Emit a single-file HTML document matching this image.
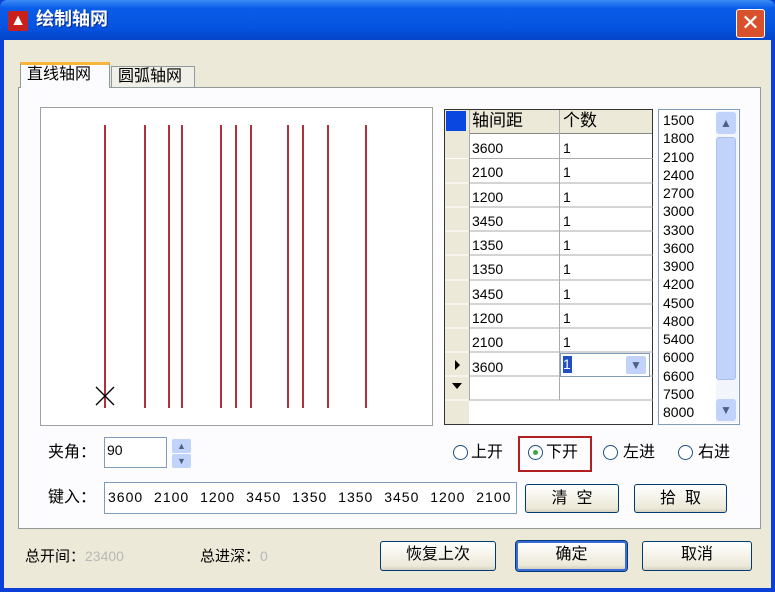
<html><head><style>
body{margin:0;width:775px;height:592px;overflow:hidden;font-family:"Liberation Sans","Noto Sans CJK SC",sans-serif;}
.win{position:absolute;left:0;top:0;width:775px;height:592px;background:#0a3fd8;}
.tb{position:absolute;left:0;top:0;width:775px;height:40px;background:linear-gradient(#3a8cf5,#0a5de8 20%,#0553e0 70%,#0443c8);border-radius:7px 7px 0 0}
.body{position:absolute;left:4px;top:40px;width:767px;height:548px;background:#ece9d8}
.abs{position:absolute;line-height:1.15}
.btn{position:absolute;border:1px solid #003c74;border-radius:3px;background:linear-gradient(#fff,#ece9d8 85%,#d6d0c0);font-size:16px;text-align:center;box-sizing:border-box}
.cell{position:absolute;font-size:14px;}
</style></head><body>
<div class="win">
<div class="tb"></div>
<div class="abs" style="left:8px;top:11px;width:20px;height:20px;background:#c8201c;border-radius:2px;color:#fff;font-size:16px;font-weight:bold;text-align:center;line-height:20px">▲</div>
<div class="abs" style="left:36px;top:9px;color:#fff;font-size:18px;font-weight:bold;text-shadow:1px 1px #0a2a8a">绘制轴网</div>
<div class="abs" style="left:736px;top:9px;width:29px;height:29px;background:#d9512c;border:1px solid #fff;border-radius:3px;box-sizing:border-box;color:#fff;font-size:22px;text-align:center;line-height:26px">✕</div>
<div class="body"></div>
<div class="abs" style="left:18px;top:87px;width:741px;height:440px;background:#fcfcfe;border:1px solid #919b9c"></div>
<div class="abs" style="left:20px;top:62px;width:90px;height:26px;background:#fcfcfe;border:1px solid #919b9c;border-bottom:none;border-top:3px solid #f9b43a;box-sizing:border-box;font-size:16px;padding:0 0 0 6px;line-height:20px">直线轴网</div>
<div class="abs" style="left:111px;top:66px;width:84px;height:21px;background:#f0efe8;border:1px solid #919b9c;border-bottom:none;box-sizing:border-box;font-size:16px;padding:0 0 0 6px;line-height:19px">圆弧轴网</div>
<svg class="abs" style="left:40px;top:107px" width="393" height="320">
<rect x="0.5" y="0.5" width="392" height="318" fill="#fff" stroke="#a0a0a0"/>
<g stroke="#b03040" stroke-width="2">
<line x1="65" y1="18" x2="65" y2="301"/><line x1="105" y1="18" x2="105" y2="301"/><line x1="129" y1="18" x2="129" y2="301"/><line x1="142" y1="18" x2="142" y2="301"/><line x1="181" y1="18" x2="181" y2="301"/><line x1="196" y1="18" x2="196" y2="301"/><line x1="211" y1="18" x2="211" y2="301"/><line x1="248" y1="18" x2="248" y2="301"/><line x1="263" y1="18" x2="263" y2="301"/><line x1="288" y1="18" x2="288" y2="301"/><line x1="326" y1="18" x2="326" y2="301"/></g>
<g stroke="#000" stroke-width="1.3"><line x1="56" y1="280" x2="74" y2="298"/><line x1="74" y1="280" x2="56" y2="298"/></g>
</svg>
<div class="abs" style="left:444px;top:109px;width:209px;height:316px;background:#fff;border:1px solid #333;box-sizing:border-box"></div>
<div class="abs" style="left:445px;top:110px;width:24px;height:314px;background:#ece9d8"></div>
<div class="abs" style="left:446px;top:111px;width:20px;height:20px;background:#0a46e0"></div>
<div class="abs" style="left:469px;top:110px;width:183px;height:23px;background:#ece9d8;border-bottom:1px solid #888"></div>
<div class="cell" style="left:472px;top:110px;font-size:17px;line-height:22px">轴间距</div>
<div class="cell" style="left:563px;top:110px;font-size:17px;line-height:22px">个数</div>
<svg class="abs" style="left:445px;top:110px" width="208" height="315">
<g stroke="#aaa"><line x1="114.5" y1="0" x2="114.5" y2="290"/><line x1="24.5" y1="0" x2="24.5" y2="290"/>
<line x1="24" y1="48.5" x2="208" y2="48.5"/><line x1="24" y1="73" x2="208" y2="73"/><line x1="24" y1="97" x2="208" y2="97"/><line x1="24" y1="121" x2="208" y2="121"/><line x1="24" y1="145" x2="208" y2="145"/><line x1="24" y1="170" x2="208" y2="170"/><line x1="24" y1="194" x2="208" y2="194"/><line x1="24" y1="218" x2="208" y2="218"/><line x1="24" y1="242" x2="208" y2="242"/><line x1="24" y1="266" x2="208" y2="266"/><line x1="24" y1="290" x2="208" y2="290"/></g>
<g stroke="#fff"><line x1="0" y1="48.5" x2="23" y2="48.5"/><line x1="0" y1="73" x2="23" y2="73"/><line x1="0" y1="97" x2="23" y2="97"/><line x1="0" y1="121" x2="23" y2="121"/><line x1="0" y1="145" x2="23" y2="145"/><line x1="0" y1="170" x2="23" y2="170"/><line x1="0" y1="194" x2="23" y2="194"/><line x1="0" y1="218" x2="23" y2="218"/><line x1="0" y1="242" x2="23" y2="242"/><line x1="0" y1="266" x2="23" y2="266"/><line x1="0" y1="290" x2="23" y2="290"/></g>
<path d="M10 250 L15 255 L10 260Z M7 273 L17 273 L12 279Z" fill="#000"/>
</svg>
<div class="cell" style="left:472px;top:136px;line-height:24.3px">3600<br>2100<br>1200<br>3450<br>1350<br>1350<br>3450<br>1200<br>2100<br>3600</div>
<div class="cell" style="left:563px;top:136px;line-height:24.3px">1<br>1<br>1<br>1<br>1<br>1<br>1<br>1<br>1</div>
<div class="abs" style="left:560px;top:353px;width:90px;height:24px;background:#fff;border:1px solid #7f9db9;box-sizing:border-box"></div>
<div class="abs" style="left:563px;top:356px;width:9px;height:17px;background:#2050c0;color:#fff;font-size:14px;line-height:17px">1</div>
<div class="abs" style="left:626px;top:356px;width:20px;height:18px;background:#c1d3fb;border-radius:2px;color:#4d6185;font-size:12px;text-align:center;line-height:18px">▼</div>
<div class="abs" style="left:658px;top:109px;width:82px;height:316px;background:#fff;border:1px solid #7f9db9;box-sizing:border-box"></div>
<div class="cell" style="left:663px;top:111px;line-height:18.25px;font-size:14px">1500<br>1800<br>2100<br>2400<br>2700<br>3000<br>3300<br>3600<br>3900<br>4200<br>4500<br>4800<br>5400<br>6000<br>6600<br>7500<br>8000</div>
<div class="abs" style="left:716px;top:111px;width:22px;height:312px;background:#f3f5fd"></div>
<div class="abs" style="left:716px;top:112px;width:20px;height:22px;background:#c1d3fb;border-radius:3px;color:#4d6185;font-size:12px;text-align:center;line-height:22px">▲</div>
<div class="abs" style="left:716px;top:137px;width:20px;height:243px;background:#c1d3fb;border:1px solid #a8bff0;border-radius:3px;box-sizing:border-box"></div>
<div class="abs" style="left:716px;top:399px;width:20px;height:22px;background:#c1d3fb;border-radius:3px;color:#4d6185;font-size:12px;text-align:center;line-height:22px">▼</div>
<div class="abs" style="left:48px;top:443px;font-size:16px;line-height:20px">夹角：</div>
<div class="abs" style="left:104px;top:437px;width:63px;height:31px;background:#fff;border:1px solid #7f9db9;box-sizing:border-box;font-size:14px;padding:4px 2px">90</div>
<div class="abs" style="left:172px;top:439px;width:19px;height:14px;background:#c1d3fb;border-radius:2px;font-size:9px;color:#4d6185;text-align:center;line-height:14px">▲</div>
<div class="abs" style="left:172px;top:454px;width:19px;height:14px;background:#c1d3fb;border-radius:2px;font-size:9px;color:#4d6185;text-align:center;line-height:14px">▼</div>
<div class="abs" style="left:518px;top:436px;width:74px;height:36px;border:2px solid #b02020;box-sizing:border-box"></div>
<div class="abs" style="left:453px;top:445px;width:15px;height:15px;border:1px solid #1c5180;border-radius:50%;background:#fff;box-sizing:border-box"></div>
<div class="abs" style="left:471px;top:443px;font-size:16px;line-height:20px">上开</div>
<div class="abs" style="left:528px;top:445px;width:15px;height:15px;border:1px solid #1c5180;border-radius:50%;background:#fff;box-sizing:border-box"></div>
<div class="abs" style="left:533px;top:450px;width:5px;height:5px;border-radius:50%;background:#3da73d"></div>
<div class="abs" style="left:546px;top:443px;font-size:16px;line-height:20px">下开</div>
<div class="abs" style="left:603px;top:445px;width:15px;height:15px;border:1px solid #1c5180;border-radius:50%;background:#fff;box-sizing:border-box"></div>
<div class="abs" style="left:623px;top:443px;font-size:16px;line-height:20px">左进</div>
<div class="abs" style="left:678px;top:445px;width:15px;height:15px;border:1px solid #1c5180;border-radius:50%;background:#fff;box-sizing:border-box"></div>
<div class="abs" style="left:698px;top:443px;font-size:16px;line-height:20px">右进</div>
<div class="abs" style="left:48px;top:488px;font-size:16px;line-height:20px">键入：</div>
<div class="abs" style="left:104px;top:482px;width:413px;height:32px;background:#fff;border:1px solid #7f9db9;box-sizing:border-box;font-size:14px;padding:6px 3px;white-space:nowrap;letter-spacing:1px;word-spacing:6px;overflow:hidden">3600 2100 1200 3450 1350 1350 3450 1200 2100</div>
<div class="btn" style="left:525px;top:484px;width:94px;height:29px;line-height:27px">清&nbsp;&nbsp;空</div>
<div class="btn" style="left:634px;top:484px;width:93px;height:29px;line-height:27px">拾&nbsp;&nbsp;取</div>
<div class="abs" style="left:25px;top:546px;font-size:15px;line-height:20px">总开间：<span style="color:#b8b8b8;font-size:14px">23400</span></div>
<div class="abs" style="left:200px;top:546px;font-size:15px;line-height:20px">总进深：<span style="color:#b8b8b8;font-size:14px">0</span></div>
<div class="btn" style="left:380px;top:541px;width:116px;height:30px;line-height:26px">恢复上次</div>
<div class="btn" style="left:516px;top:541px;width:111px;height:30px;line-height:24px;border:2px solid #3c6ad8;outline:1px solid #003c74">确定</div>
<div class="btn" style="left:642px;top:541px;width:110px;height:30px;line-height:26px">取消</div>
</div>
</body></html>
